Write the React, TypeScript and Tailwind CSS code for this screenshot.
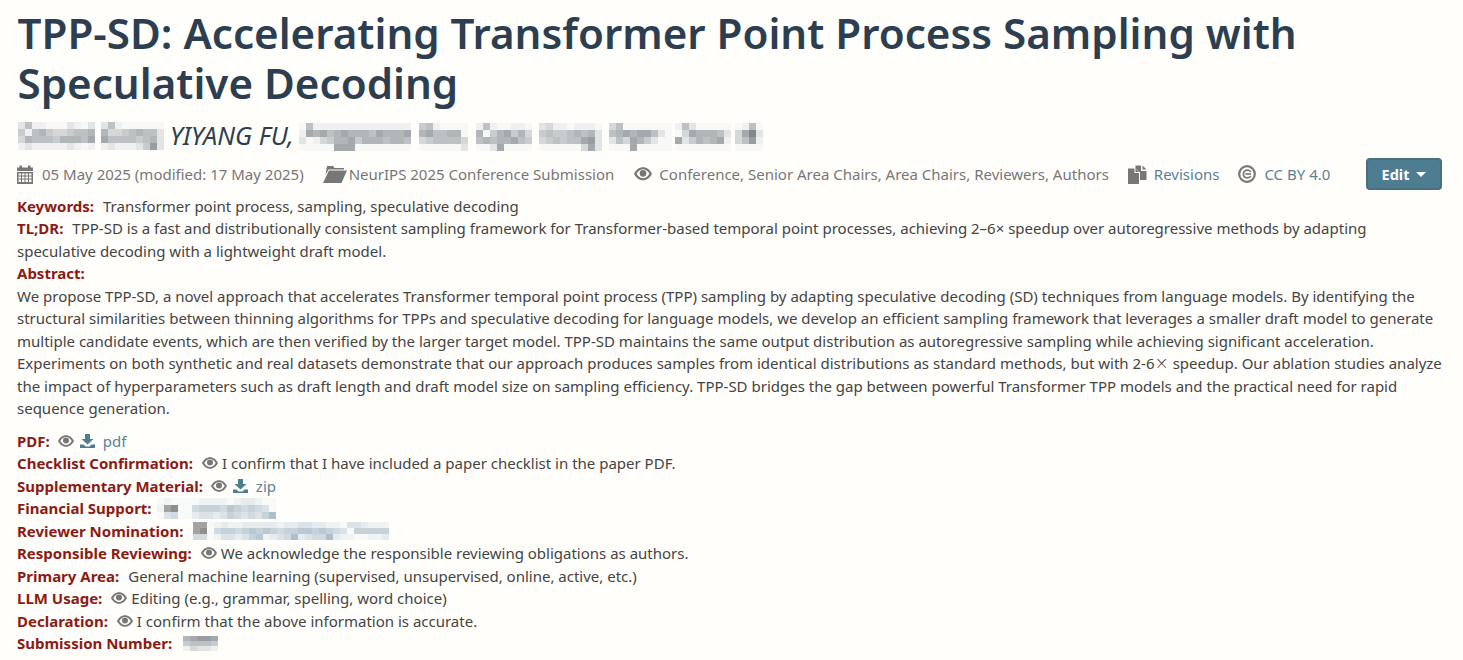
import React from "react";

const Gray = "#777777";

function Eye({ className = "", w = 16 }: { className?: string; w?: number }) {
  return (
    <svg viewBox="0 0 16 12" width={w} height={(w * 12) / 16} className={`shrink-0 ${className}`} fill={Gray}>
      <path fillRule="evenodd" d="M8 0.200C4.500 0.200 1.600 2.600 0 6c1.600 3.400 4.500 5.800 8 5.800s6.400-2.400 8-5.800C14.400 2.600 11.500 0.200 8 0.200zM8 2C5.800 2 3.800 3.500 2.300 6 3.800 8.500 5.800 10 8 10s4.200-1.500 5.700-4C12.200 3.500 10.200 2 8 2z" />
      <circle cx="8" cy="5.600" r="3" />
    </svg>
  );
}

function Download() {
  return (
    <svg viewBox="0 0 15 14" width="15" height="14" fill="#4e7d91" className="shrink-0">
      <path d="M5 0h5v5h3.500L7.500 10.500 1.500 5H5z" />
      <path d="M0 10.500h3.500l2 2h4l2-2H15V14H0z" />
    </svg>
  );
}

function Calendar() {
  return (
    <svg viewBox="0 0 16 19" width="16" height="19" fill={Gray} className="shrink-0">
      <path d="M0 2.500h2.500V0.500h2.500v2h6V0.500h2.500v2H16v3.500H0z" />
      <path fillRule="evenodd" d="M0 7h16v12H0zM1.500 8.500v2h2.500v-2zM5 8.500v2h2.500v-2zM8.500 8.500v2H11v-2zM12 8.500v2h2.500v-2zM1.500 11.500v2h2.500v-2zM5 11.500v2h2.500v-2zM8.500 11.500v2H11v-2zM12 11.500v2h2.500v-2zM1.500 14.500v2.500h2.500v-2.500zM5 14.500v2.500h2.500v-2.500zM8.500 14.500v2.500H11v-2.500zM12 14.500v2.500h2.500v-2.500z" />
    </svg>
  );
}

function Folder() {
  return (
    <svg viewBox="0 0 24 17" width="24" height="17" fill={Gray} className="shrink-0">
      <path d="M4 0h6l1.500 2H21v1.500H5.500L2.500 9z" />
      <path d="M6 4.500h18L18.500 17H0z" />
    </svg>
  );
}

function Duplicate() {
  return (
    <svg viewBox="0 0 19 19" width="19" height="19" fill={Gray} className="shrink-0">
      <path d="M0 3.500h6.500V8H11v11H0z" />
      <path d="M7.500 3.500V0.500H13V6h5.500v9H12V7.500L7.500 3.500z" />
      <path d="M14.500 0.500l4 4h-4z" />
      <path d="M7.500 3.500l3.500 3.500H7.500z" />
    </svg>
  );
}

function Copyright() {
  return (
    <svg viewBox="0 0 18 18" width="18" height="18" fill="none" stroke={Gray} className="shrink-0">
      <circle cx="9" cy="9" r="7.800" strokeWidth="2.200" />
      <path d="M12.800 6.900C12 5.700 10.700 5.200 9.300 5.200 7.100 5.200 5.400 6.800 5.400 9s1.700 3.800 3.900 3.800c1.400 0 2.700-.5 3.500-1.700" strokeWidth="1.700" />
      <path d="M7.500 9h5.500" strokeWidth="1.700" />
    </svg>
  );
}

const grayPal: Record<string, string> = {
  "0": "#f8f8f6", "1": "#eff0ef", "2": "#e3e4e4", "3": "#d6d8d8", "4": "#c9ccce",
  "5": "#bdc1c3", "6": "#b1b6b9", "7": "#a4a9ad", "8": "#989da2", "9": "#85888b",
};
const bluePal: Record<string, string> = {
  "0": "#f8f9f9", "1": "#f0f3f4", "2": "#e6ebee", "3": "#dbe3e8", "4": "#d0dbe1",
  "5": "#c5d2da", "6": "#b9c9d3", "7": "#adbfcb", "8": "#a3a3a3", "9": "#8e8e8e",
};

// Pixelated (anonymised) patch, drawn as mosaic blocks.
function Mosaic({ rows, cell = 7, cellH, pal = grayPal, className = "" }: { rows: string[]; cell?: number; cellH?: number; pal?: Record<string, string>; className?: string }) {
  const h = cellH ?? cell;
  const cols = rows[0].length;
  return (
    <svg width={cols * cell} height={rows.length * h} viewBox={`0 0 ${cols * cell} ${rows.length * h}`} className={`shrink-0 ${className}`} shapeRendering="crispEdges">
      {rows.map((row, r) =>
        row.split("").map((ch, c) =>
          ch === "." ? null : <rect key={`${r}-${c}`} x={c * cell} y={r * h} width={cell} height={h} fill={pal[ch]} />
        )
      )}
    </svg>
  );
}

function Label({ children }: { children: React.ReactNode }) {
  return <b className="shrink-0 font-bold text-[#8c1b13]">{children}</b>;
}

function Row({ children }: { children: React.ReactNode }) {
  return <div className="flex h-[22.5px] items-center">{children}</div>;
}

function MetaItem({ icon, children, className = "" }: { icon: React.ReactNode; children: React.ReactNode; className?: string }) {
  return (
    <span className={`flex items-center ${className}`}>
      {icon}
      {children}
    </span>
  );
}

export default function App() {
  return (
    <div className="min-h-[660px] overflow-hidden bg-[#fffefb] pl-[17px] pr-[17px] pt-[8px] text-[15px] leading-[22.5px] text-[#444444] [font-family:'Noto_Sans',sans-serif]">
      <h1 className="m-0 ml-[0.5px] text-[42.150px] font-semibold leading-[50px] text-[#2c3e50]">
        TPP-SD: Accelerating Transformer Point Process Sampling with Speculative Decoding
      </h1>

      <h3 className="mt-[11px] flex h-[32px] items-center text-[25.200px] italic text-[#2c3e50]">
        <Mosaic className="ml-[1px] mt-[2px]" rows={["25110002102", "41564334556", "36555466657", "12111112101"]} />
        <Mosaic className="ml-[6px] mt-[2px]" rows={["251000000", "633456552", "755554562", "121112482"]} />
        <span className="ml-[6px]">YIYANG FU,</span>
        <Mosaic className="ml-[5px] mt-[4px]" rows={["0511111111111111", "1767567666576667", "2013466746665665", "0000077700000000"]} />
        <Mosaic className="ml-[8px] mt-[4px]" rows={["4510000", "6755660", "3455553", "0000002"]} />
        <Mosaic className="ml-[8px] mt-[4px]" rows={["15100110", "60467463", "56566754", "00270000"]} />
        <Mosaic className="ml-[7px] mt-[4px]" rows={["231101110", "454456562", "345455782", "000000372"]} />
        <Mosaic className="ml-[7px] mt-[4px]" rows={["350000000", "567677520", "253764200", "000700000"]} />
        <Mosaic className="ml-[3px] mt-[4px]" rows={["15200000", "03766652", "72465671", "00000000"]} />
        <Mosaic className="ml-[4px] mt-[4px]" rows={["0150", "3792", "3581", "0000"]} />
      </h3>

      <div className="mt-[5px] flex h-[36px] items-center text-[#777777]">
        <MetaItem icon={<Calendar />}>
          <span className="ml-[9px]">05 May 2025 (modified: 17 May 2025)</span>
        </MetaItem>
        <MetaItem icon={<Folder />} className="ml-[19px]">
          <span className="ml-[2px]">NeurIPS 2025 Conference Submission</span>
        </MetaItem>
        <MetaItem icon={<Eye w={18} />} className="ml-[20px]">
          <span className="ml-[7px]">Conference, Senior Area Chairs, Area Chairs, Reviewers, Authors</span>
        </MetaItem>
        <MetaItem icon={<Duplicate />} className="ml-[19px]">
          <span className="ml-[7px] text-[#5a8296]">Revisions</span>
        </MetaItem>
        <MetaItem icon={<Copyright />} className="ml-[19px]">
          <span className="ml-[8px] text-[#5a8296]">CC BY 4.0</span>
        </MetaItem>
        <button className="ml-auto mr-[4px] flex h-[32px] w-[76px] items-center justify-center rounded-[4px] border-2 border-[#44707f] bg-[#4e7d91] text-[14.500px] font-bold text-white">
          Edit
          <span className="ml-[7px] h-0 w-0 border-x-[5px] border-t-[5px] border-x-transparent border-t-white" />
        </button>
      </div>

      <div className="mt-[2.500px]">
        <div>
          <Label>Keywords:</Label>
          <span className="ml-[9px]">Transformer point process, sampling, speculative decoding</span>
        </div>
        <div>
          <Label>TL;DR:</Label>
          <span className="ml-[9px]">
            TPP-SD is a fast and distributionally consistent sampling framework for Transformer-based temporal point processes, achieving 2–6× speedup over autoregressive methods by adapting speculative decoding with a lightweight draft model.
          </span>
        </div>
        <div>
          <Label>Abstract:</Label>
        </div>
        <div>
          We propose TPP-SD, a novel approach that accelerates Transformer temporal point process (TPP) sampling by adapting speculative decoding (SD) techniques from language models. By identifying the structural similarities between thinning algorithms for TPPs and speculative decoding for language models, we develop an efficient sampling framework that leverages a smaller draft model to generate multiple candidate events, which are then verified by the larger target model. TPP-SD maintains the same output distribution as autoregressive sampling while achieving significant acceleration. Experiments on both synthetic and real datasets demonstrate that our approach produces samples from identical distributions as standard methods, but with 2-6<span className="text-[17px] font-light leading-none [font-family:'DejaVu_Sans',sans-serif]">×</span> speedup. Our ablation studies analyze the impact of hyperparameters such as draft length and draft model size on sampling efficiency. TPP-SD bridges the gap between powerful Transformer TPP models and the practical need for rapid sequence generation.
        </div>
      </div>

      <div className="mt-[10px]">
        <Row>
          <Label>PDF:</Label>
          <Eye className="ml-[8px]" />
          <span className="ml-[6px]"><Download /></span>
          <span className="ml-[8px] text-[#5a8296]">pdf</span>
        </Row>
        <Row>
          <Label>Checklist Confirmation:</Label>
          <Eye className="ml-[9px]" />
          <span className="ml-[4px]">I confirm that I have included a paper checklist in the paper PDF.</span>
        </Row>
        <Row>
          <Label>Supplementary Material:</Label>
          <Eye className="ml-[8px]" />
          <span className="ml-[6px]"><Download /></span>
          <span className="ml-[8px] text-[#5a8296]">zip</span>
        </Row>
        <Row>
          <Label>Financial Support:</Label>
          <Mosaic pal={bluePal} className="ml-[5px]" rows={["01000011110122100", "18900455546545430", "03400233235434357"]} />
        </Row>
        <Row>
          <Label>Reviewer Nomination:</Label>
          <Mosaic pal={bluePal} cell={7} cellH={6} className="ml-[10px]" rows={["8801211222221223322110332111", "8904554565654556656543055555", "4401332356123472344721100112"]} />
        </Row>
        <Row>
          <Label>Responsible Reviewing:</Label>
          <Eye className="ml-[9px]" />
          <span className="ml-[4px]">We acknowledge the responsible reviewing obligations as authors.</span>
        </Row>
        <Row>
          <Label>Primary Area:</Label>
          <span className="ml-[9px]">General machine learning (supervised, unsupervised, online, active, etc.)</span>
        </Row>
        <Row>
          <Label>LLM Usage:</Label>
          <Eye className="ml-[9px]" />
          <span className="ml-[4px]">Editing (e.g., grammar, spelling, word choice)</span>
        </Row>
        <Row>
          <Label>Declaration:</Label>
          <Eye className="ml-[9px]" />
          <span className="ml-[4px]">I confirm that the above information is accurate.</span>
        </Row>
        <Row>
          <Label>Submission Number:</Label>
          <Mosaic cell={7} cellH={5} className="ml-[11px]" rows={["67887", "45554", "13221"]} />
        </Row>
      </div>
    </div>
  );
}
